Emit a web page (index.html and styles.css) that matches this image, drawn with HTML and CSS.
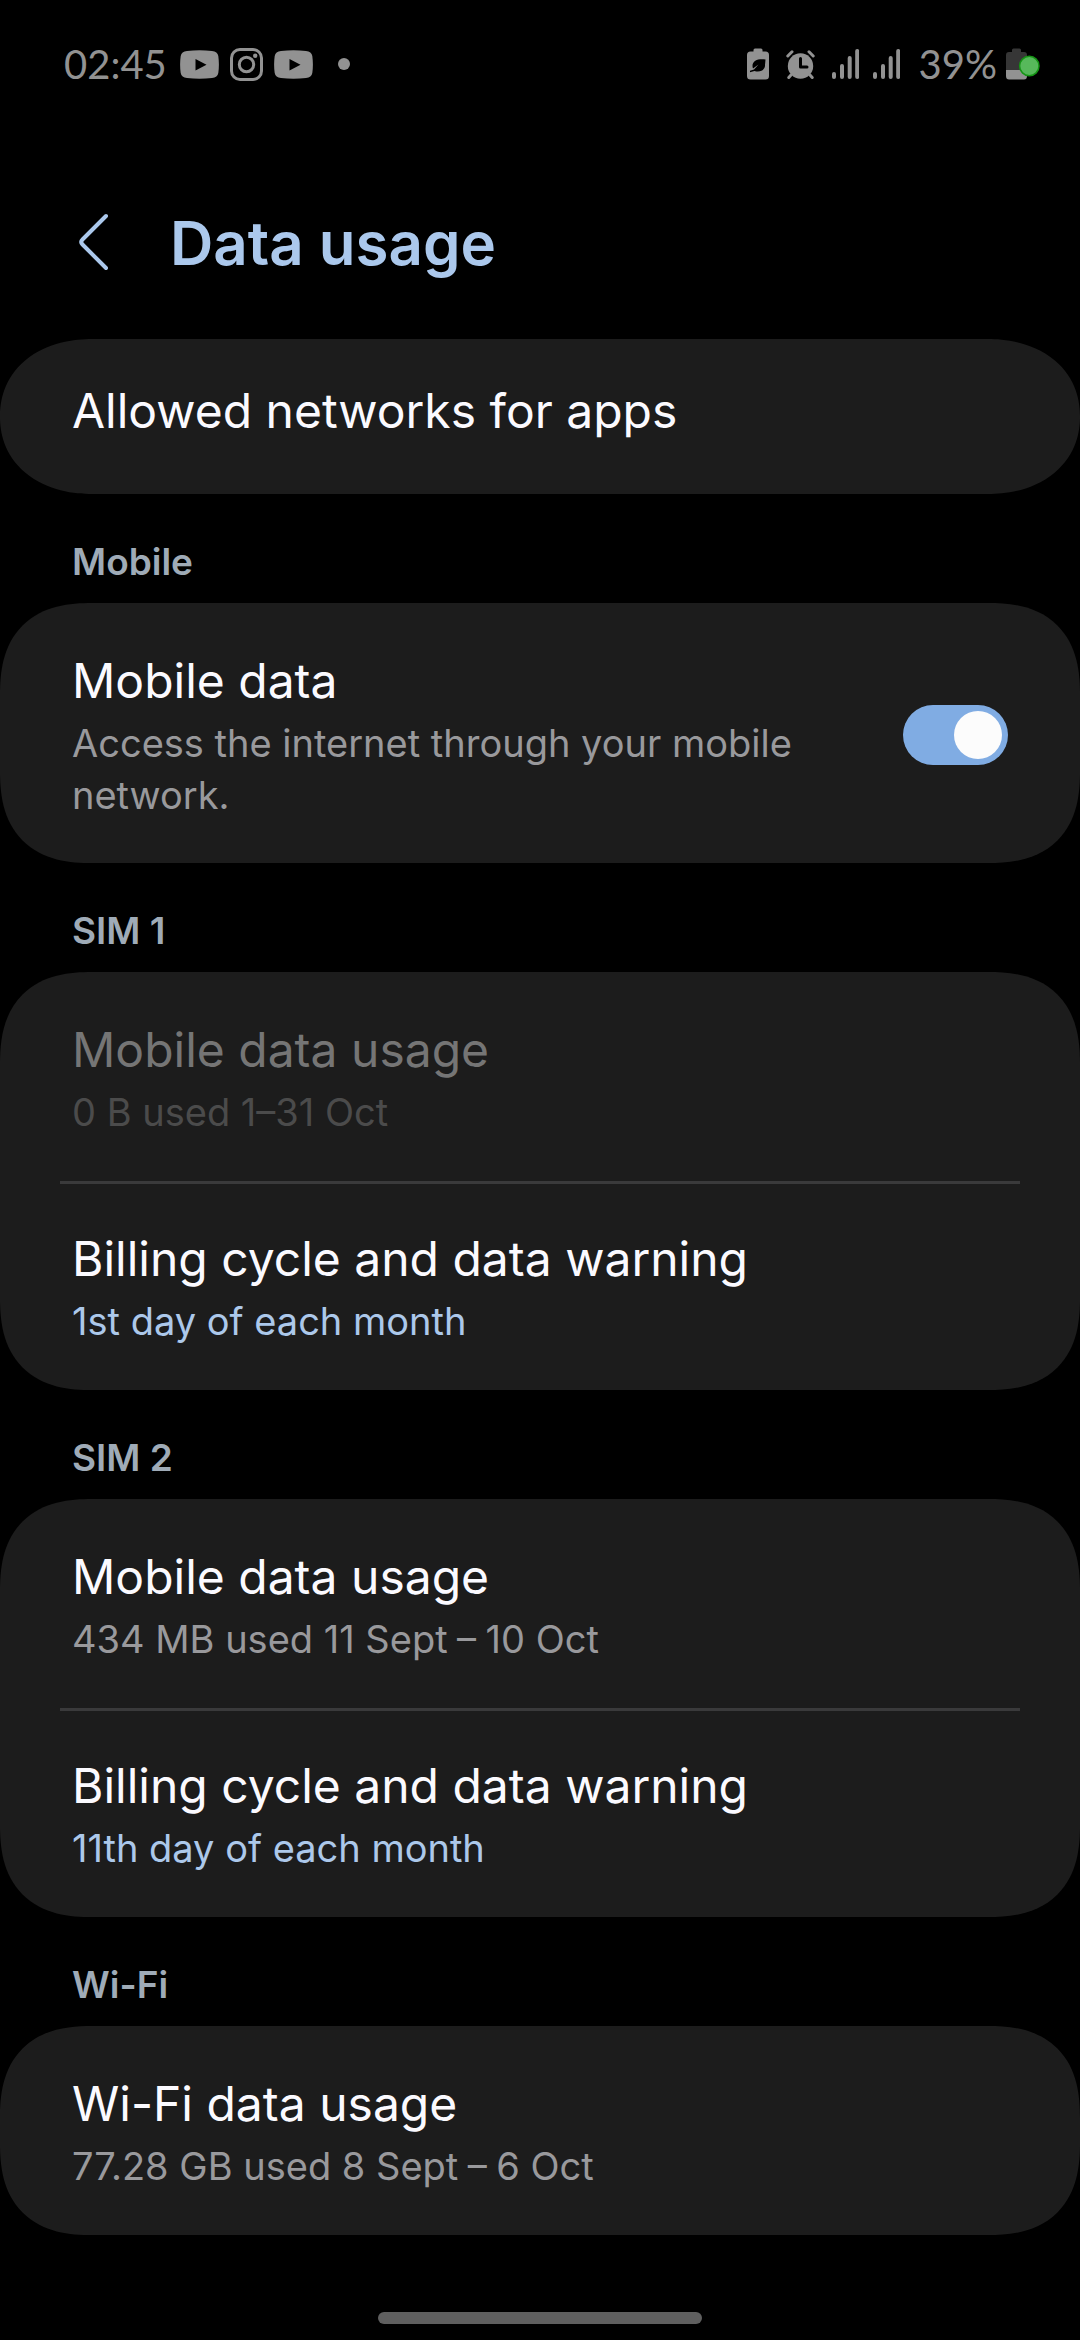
FILE: index.html
```html
<!DOCTYPE html>
<html lang="en">
<head>
<meta charset="utf-8">
<meta name="viewport" content="width=device-width">
<title>Data usage</title>
<link rel="stylesheet" href="styles.css">
</head>
<body>
<div class="status">
  <div class="status-group">
    <span class="status-text">02:45</span>
    <svg class="icon" width="39" height="29" viewBox="0 0 39 29"><path fill-rule="evenodd" d="M7 1Q19.500-.5 32 1Q37.500 1.300 38.300 6Q39.500 14.500 38.300 23Q37.500 27.700 32 28Q19.500 29.500 7 28Q1.500 27.700.7 23Q-.5 14.500.7 6Q1.500 1.300 7 1ZM15.500 9V20.500L26.500 14.700Z"/></svg>
    <svg class="icon" width="33" height="33" viewBox="0 0 33 33"><rect class="line" x="1.500" y="1.500" width="30" height="30" rx="8.500"/><circle class="line" cx="16.500" cy="16.500" r="7.200"/><circle cx="25.200" cy="7.800" r="2.200"/></svg>
    <svg class="icon" width="39" height="29" viewBox="0 0 39 29"><path fill-rule="evenodd" d="M7 1Q19.500-.5 32 1Q37.500 1.300 38.300 6Q39.500 14.500 38.300 23Q37.500 27.700 32 28Q19.500 29.500 7 28Q1.500 27.700.7 23Q-.5 14.500.7 6Q1.500 1.300 7 1ZM15.500 9V20.500L26.500 14.700Z"/></svg>
    <span class="more-dot"></span>
  </div>
  <div class="status-group status-group-end">
    <svg class="icon" width="22" height="32" viewBox="0 0 22 32"><path fill-rule="evenodd" d="M6.500 3.500V2Q6.500.5 8 .5H14Q15.500.5 15.500 2V3.500H18.500Q22 3.500 22 7V28Q22 31.500 18.500 31.500H3.500Q0 31.500 0 28V7Q0 3.500 3.500 3.500ZM18.500 11.500C12 10.500 5.500 12 5.500 18C5.500 19 5.700 19.800 6 20.500L11.500 16.500L7 21.500L3 22.800V24.300L7.500 23C13.500 25 18.500 21.500 18 17Z"/></svg>
    <svg class="icon" width="29" height="30" viewBox="0 0 29 30"><circle cx="14.500" cy="17" r="12.700"/><path class="line" d="M1.800 7L6 2.800M27.200 7L23 2.800M5 26L2.800 28.500M24 26L26.200 28.500"/><path class="cut" d="M14.500 9.500V18H21"/></svg>
    <svg class="icon" width="27" height="30" viewBox="0 0 27 30"><path class="bars" d="M2 25V28M10 17V28M17.700 9V28M25.200 2V28"/></svg>
    <svg class="icon icon-tight" width="27" height="30" viewBox="0 0 27 30"><path class="bars" d="M2 25V28M10 17V28M17.700 9V28M25.200 2V28"/></svg>
    <span class="status-text">39%</span>
    <svg class="icon icon-battery" width="34" height="32" viewBox="0 0 34 32"><path fill="#363636" d="M0 22V7Q0 4 3 4H6V2Q6 .5 7.500 .5H13.500Q15 .5 15 2V4H18Q21 4 21 7V22Z"/><path d="M0 22H21V28Q21 31.500 18 31.500H3Q0 31.500 0 28Z"/><circle cx="23.300" cy="18" r="9.700" fill="#57b85b" stroke="#159415" stroke-width="1.500"/></svg>
  </div>
</div>

<header class="app-bar">
  <button class="back" type="button" aria-label="Back"><svg width="34" height="60" viewBox="0 0 34 60"><path d="M30 3L6.500 26.500Q4 29 6.500 31.500L30 55"/></svg></button>
  <h1 class="page-title">Data usage</h1>
</header>

<main>
  <section class="card card-single">
    <a class="row row-single" href="#networks"><span class="title">Allowed networks for apps</span></a>
  </section>

  <h2 class="section-title">Mobile</h2>
  <section class="card">
    <label class="row row-switch">
      <span class="row-text">
        <span class="title">Mobile data</span>
        <span class="summary">Access the internet through your mobile network.</span>
      </span>
      <input class="switch" type="checkbox" role="switch" checked>
    </label>
  </section>

  <h2 class="section-title">SIM 1</h2>
  <section class="card">
    <a class="row row-disabled" aria-disabled="true"><span class="title">Mobile data usage</span><span class="summary">0 B used 1–31 Oct</span></a>
    <a class="row" href="#sim1-billing"><span class="title">Billing cycle and data warning</span><span class="summary summary-value">1st day of each month</span></a>
  </section>

  <h2 class="section-title">SIM 2</h2>
  <section class="card">
    <a class="row" href="#sim2-usage"><span class="title">Mobile data usage</span><span class="summary">434 MB used 11 Sept&#8197;–&#8197;10 Oct</span></a>
    <a class="row" href="#sim2-billing"><span class="title">Billing cycle and data warning</span><span class="summary summary-value">11th day of each month</span></a>
  </section>

  <h2 class="section-title">Wi-Fi</h2>
  <section class="card">
    <a class="row" href="#wifi-usage"><span class="title">Wi-Fi data usage</span><span class="summary">77.28 GB used 8 Sept&#8197;–&#8197;6 Oct</span></a>
  </section>
</main>

<div class="nav-area"><div class="nav-handle"></div></div>
</body>
</html>
```
FILE: styles.css
```css
* { box-sizing: border-box; }

body {
  margin: 0;
  background: #000;
  color: #fbfaff;
  font-family: Inter, Roboto, sans-serif;
}

/* Status bar */
.status {
  display: flex;
  justify-content: space-between;
  align-items: center;
  height: 128px;
  padding: 0 40px 0 62px;
}
.status-group { display: flex; align-items: center; gap: 11px; }
.status-group-end { gap: 17px; }
.status-text {
  padding: 0 2px;
  color: #929292;
  font: 40px/48px Lato, sans-serif;
}
.icon { display: block; fill: #929292; }
.icon .line { fill: none; stroke: #929292; stroke-width: 3; stroke-linecap: round; }
.icon .cut { fill: none; stroke: #000; stroke-width: 3; stroke-linecap: round; stroke-linejoin: round; }
.icon .bars { fill: none; stroke: #929292; stroke-width: 4; stroke-linecap: round; }
.icon-tight { margin-left: -3px; }
.icon-battery { margin-left: -10px; }
.more-dot {
  width: 12px;
  height: 12px;
  margin-left: 14px;
  border-radius: 50%;
  background: #929292;
}

/* App bar */
.app-bar {
  display: flex;
  align-items: center;
  gap: 60px;
  padding: 78px 76px 59px;
}
.back {
  display: block;
  padding: 0;
  border: 0;
  background: none;
}
.back svg {
  display: block;
  fill: none;
  stroke: #abc8ec;
  stroke-width: 4;
  stroke-linecap: round;
}
.page-title {
  margin: 0;
  color: #abc8ec;
  font-size: 60px;
  font-weight: 600;
  line-height: 74px;
}

/* Preference groups */
.section-title {
  margin: 0;
  padding: 45px 72px 19px;
  color: #9fabb7;
  font-size: 37px;
  font-weight: 600;
  line-height: 45px;
}
.card {
  padding: 0 60px;
  border-radius: 78px;
  background: #1c1c1c;
}
@supports (corner-shape: superellipse(1.3)) {
  .card { border-radius: 92px; corner-shape: superellipse(1.3); }
  .card-single { border-radius: 92px / 77px; corner-shape: superellipse(1.1); }
}
.row {
  display: block;
  padding: 46px 12px 43px;
  color: inherit;
  text-decoration: none;
}
.row + .row {
  padding-top: 43px;
  border-top: 3px solid #3a3a3b;
}
.row-single { padding: 40px 12px 51px; }
.row-switch {
  display: flex;
  align-items: center;
  gap: 80px;
  padding-bottom: 42px;
}
.row-text { flex: 1; }
.title {
  display: block;
  font-size: 48px;
  line-height: 64px;
}
.summary {
  display: block;
  margin-top: 4px;
  color: #99999c;
  font-size: 38px;
  line-height: 52px;
}
.summary-value { color: #acc8ea; }
.row-disabled .title { color: #757575; }
.row-disabled .summary { color: #4b4b4b; }

.switch {
  flex: none;
  width: 105px;
  height: 60px;
  margin: 0;
  padding: 6px;
  border-radius: 30px;
  background: #555;
  appearance: none;
}
.switch::before {
  content: "";
  display: block;
  width: 48px;
  height: 48px;
  border-radius: 50%;
  background: #fcfcfc;
}
.switch:checked { background: #80ace3; }
.switch:checked::before { margin-left: auto; }

/* Gesture handle */
.nav-area { padding: 77px 0 16px; }
.nav-handle {
  width: 30%;
  height: 12px;
  margin: 0 auto;
  border-radius: 6px;
  background: #5f5f5f;
}
```
